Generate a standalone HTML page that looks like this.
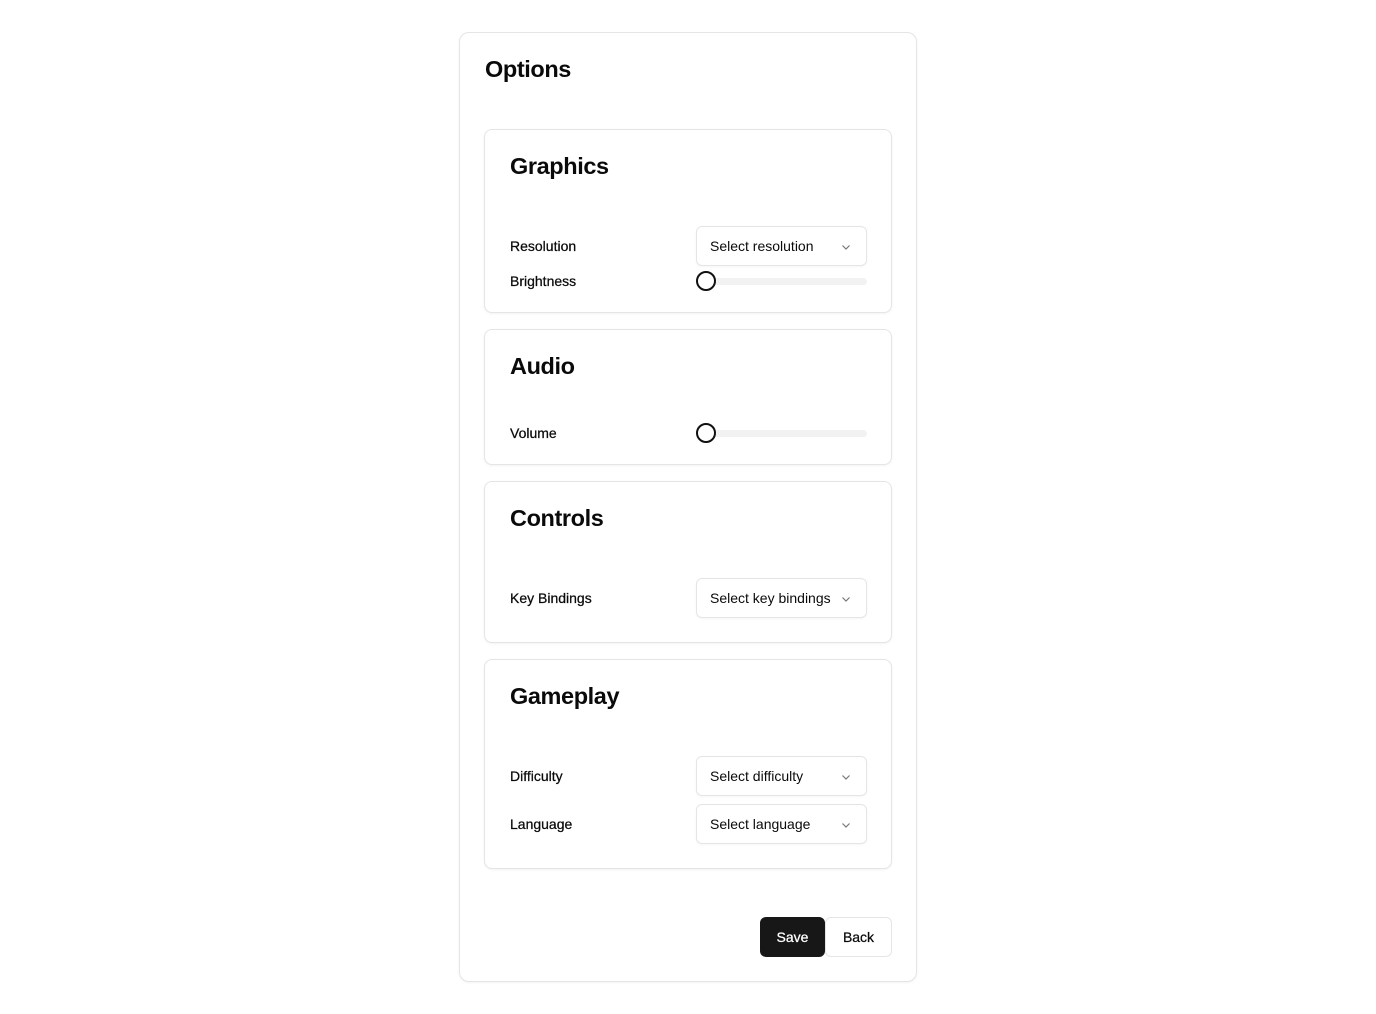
<!DOCTYPE html>
<html><head><style>
*{box-sizing:border-box;margin:0;padding:0}
body{width:1376px;height:1014px;background:#fff;font-family:"Liberation Sans",Arial,sans-serif;color:#0a0a0a;position:relative}
.a{position:absolute}
.card{position:absolute;border:1px solid #e5e5e5;border-radius:8px;background:#fff;box-shadow:0 1px 2px rgba(0,0,0,.05)}
h1{position:absolute;font-size:23.5px;font-weight:bold;letter-spacing:-.4px}
h2{position:absolute;left:25px;font-size:23.5px;font-weight:bold;letter-spacing:-.4px}
.lbl{position:absolute;left:25px;font-size:14px;transform:translateY(-50%);-webkit-text-stroke:.25px #0a0a0a}
.sel{position:absolute;left:211px;width:171px;height:40px;border:1px solid #e5e5e5;border-radius:6px;font-size:14px;padding-left:13px;line-height:38px;box-shadow:0 1px 2px rgba(0,0,0,.04)}
.sel svg{position:absolute;right:13px;top:13px}
.trk{position:absolute;left:211px;width:171px;height:7px;background:#f2f2f2;border-radius:4px}
.th{position:absolute;left:0;top:-7px;width:20px;height:20px;border:2px solid #111;border-radius:50%;background:#fff}
</style></head><body>
<div class="card" style="left:459px;top:32px;width:458px;height:950px;border-radius:10px">
<h1 style="left:25px;top:23px">Options</h1>
</div>
<div class="card" style="left:484px;top:129px;width:408px;height:184px">
<h2 style="top:23px">Graphics</h2>
<div class="lbl" style="top:116px">Resolution</div>
<div class="sel" style="top:96px">Select resolution<svg width="14" height="14" viewBox="0 0 14 14"><path d="M3.5 5.5l3.5 3.5 3.5-3.5" fill="none" stroke="#777" stroke-width="1.2"/></svg></div>
<div class="lbl" style="top:151px">Brightness</div>
<div class="trk" style="top:148px"><div class="th"></div></div>
</div>
<div class="card" style="left:484px;top:329px;width:408px;height:136px">
<h2 style="top:23px">Audio</h2>
<div class="lbl" style="top:103px">Volume</div>
<div class="trk" style="top:100px"><div class="th"></div></div>
</div>
<div class="card" style="left:484px;top:481px;width:408px;height:162px">
<h2 style="top:23px">Controls</h2>
<div class="lbl" style="top:116px">Key Bindings</div>
<div class="sel" style="top:96px">Select key bindings<svg width="14" height="14" viewBox="0 0 14 14"><path d="M3.5 5.5l3.5 3.5 3.5-3.5" fill="none" stroke="#777" stroke-width="1.2"/></svg></div>
</div>
<div class="card" style="left:484px;top:659px;width:408px;height:210px">
<h2 style="top:23px">Gameplay</h2>
<div class="lbl" style="top:116px">Difficulty</div>
<div class="sel" style="top:96px">Select difficulty<svg width="14" height="14" viewBox="0 0 14 14"><path d="M3.5 5.5l3.5 3.5 3.5-3.5" fill="none" stroke="#777" stroke-width="1.2"/></svg></div>
<div class="lbl" style="top:164px">Language</div>
<div class="sel" style="top:144px">Select language<svg width="14" height="14" viewBox="0 0 14 14"><path d="M3.5 5.5l3.5 3.5 3.5-3.5" fill="none" stroke="#777" stroke-width="1.2"/></svg></div>
</div>
<div class="a" style="left:760px;top:917px;width:65px;height:40px;background:#171717;color:#fff;border-radius:6px;font-size:14px;text-align:center;line-height:40px;-webkit-text-stroke:.25px #fff">Save</div>
<div class="a" style="left:825px;top:917px;width:67px;height:40px;border:1px solid #e5e5e5;border-radius:6px;font-size:14px;text-align:center;line-height:38px;-webkit-text-stroke:.25px #0a0a0a">Back</div>
</body></html>
